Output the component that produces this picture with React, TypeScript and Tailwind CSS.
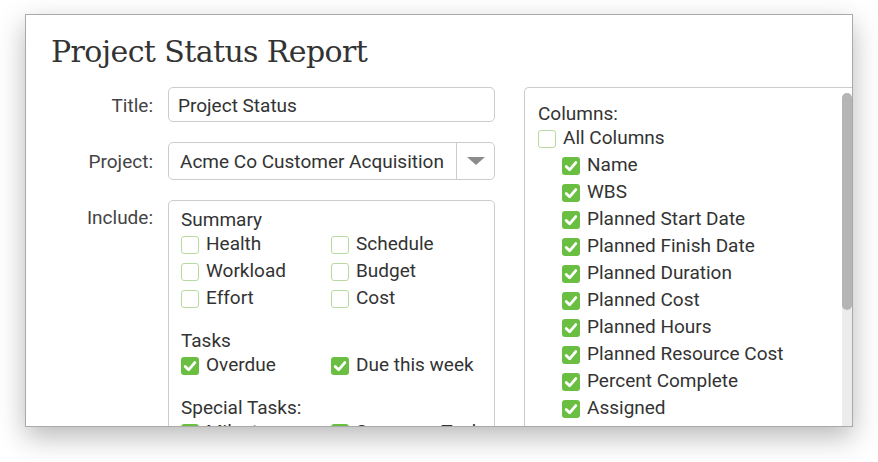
import React from 'react';

const Check: React.FC = () => (
    <svg className="w-[18px] h-[18px]" viewBox="0 0 18 18">
        <path d="M4.2 9.4 L7.6 12.8 L13.8 5.6" fill="none" stroke="#ffffff" strokeWidth={2.8} strokeLinecap="round" strokeLinejoin="round" />
    </svg>
);

const Box: React.FC<{ checked?: boolean }> = ({ checked }) =>
    checked ? (
        <span className="flex w-[18px] h-[18px] shrink-0 rounded-[3px] bg-[#6abf42]">
            <Check />
        </span>
    ) : (
        <span className="block w-[18px] h-[18px] shrink-0 rounded-[3px] border border-[#b8da9f] bg-white" />
    );

const Option: React.FC<{ label: string; checked?: boolean; className?: string }> = ({ label, checked, className }) => (
    <div className={'flex items-center gap-[7px] h-[27px] ' + (className ?? '')}>
        <Box checked={checked} />
        <span className="whitespace-nowrap">{label}</span>
    </div>
);

const columns = [
    'Name',
    'WBS',
    'Planned Start Date',
    'Planned Finish Date',
    'Planned Duration',
    'Planned Cost',
    'Planned Hours',
    'Planned Resource Cost',
    'Percent Complete',
    'Assigned',
    'Actual Start Date',
];

const App: React.FC = () => {
    return (
        <div className="w-[878px] h-[462px] bg-white pt-[14px] pl-[25px] overflow-hidden font-['Roboto',sans-serif] text-[#333333]">
            {/* Report window */}
            <div className="w-[828px] h-[413px] bg-white border border-[#a9a9a9] overflow-hidden shadow-[0_10px_26px_rgba(0,0,0,0.28)]">
                <h1 className="pt-[22px] pl-[25px] mb-[20px] font-['DejaVu_Serif',serif] text-[30px] leading-none tracking-[-0.6px] text-[#333333]">
                    Project Status Report
                </h1>

                <div className="flex items-start gap-[29px]">
                    {/* Form fields */}
                    <div className="grid content-start grid-cols-[127px_327px] gap-x-[15px] gap-y-[20px] text-[19px]">
                        <div className="flex items-center justify-end pt-[3px] text-[#444444]">Title:</div>
                        <div className="flex items-center h-[35px] rounded-[5px] border border-[#cccccc] pl-[9px] pt-[3px]">
                            Project Status
                        </div>

                        <div className="flex items-center justify-end pt-[2px] text-[#444444]">Project:</div>
                        <div className="flex h-[38px] rounded-[5px] border border-[#cccccc]">
                            <div className="flex-1 flex items-center pl-[11px] pt-[2px] whitespace-nowrap">Acme Co Customer Acquisition</div>
                            <div className="w-[38px] flex items-center justify-center border-l border-[#cccccc]">
                                <svg width="18" height="8" viewBox="0 0 18 8">
                                    <path d="M0 0 H18 L9 8 Z" fill="#8c8c8c" />
                                </svg>
                            </div>
                        </div>

                        <div className="flex justify-end pt-[7px] leading-[22px] text-[#444444]">Include:</div>
                        <div className="h-[240px] rounded-[5px] border border-[#cccccc] pt-[8px] pl-[12px]">
                            <div className="h-[22px] leading-[22px]">Summary</div>
                            <div className="grid grid-cols-[150px_1fr]">
                                <Option label="Health" />
                                <Option label="Schedule" />
                                <Option label="Workload" />
                                <Option label="Budget" />
                                <Option label="Effort" />
                                <Option label="Cost" />
                            </div>
                            <div className="h-[22px] leading-[22px] mt-[18px]">Tasks</div>
                            <div className="grid grid-cols-[150px_1fr]">
                                <Option label="Overdue" checked />
                                <Option label="Due this week" checked />
                            </div>
                            <div className="h-[22px] leading-[22px] mt-[18px]">Special Tasks:</div>
                            <div className="grid grid-cols-[150px_1fr]">
                                <Option label="Milestones" checked />
                                <Option label="Summary Tasks" checked />
                            </div>
                        </div>
                    </div>

                    {/* Columns list */}
                    <div className="flex-1 flex h-[380px] rounded-tl-[5px] border-l border-t border-b border-[#cccccc] text-[19px]">
                        <div className="flex-1 pt-[15px] pl-[13px]">
                            <div className="h-[22px] leading-[22px]">Columns:</div>
                            <Option label="All Columns" />
                            {columns.map((c) => (
                                <Option key={c} label={c} checked className="pl-[24px]" />
                            ))}
                        </div>
                        <div className="w-[10px] pt-[5px]">
                            <div className="h-full rounded-t-full bg-[#ececec]">
                                <div className="h-[217px] rounded-full bg-[#b5b5b5]" />
                            </div>
                        </div>
                    </div>
                </div>
            </div>
        </div>
    );
};

export default App;
